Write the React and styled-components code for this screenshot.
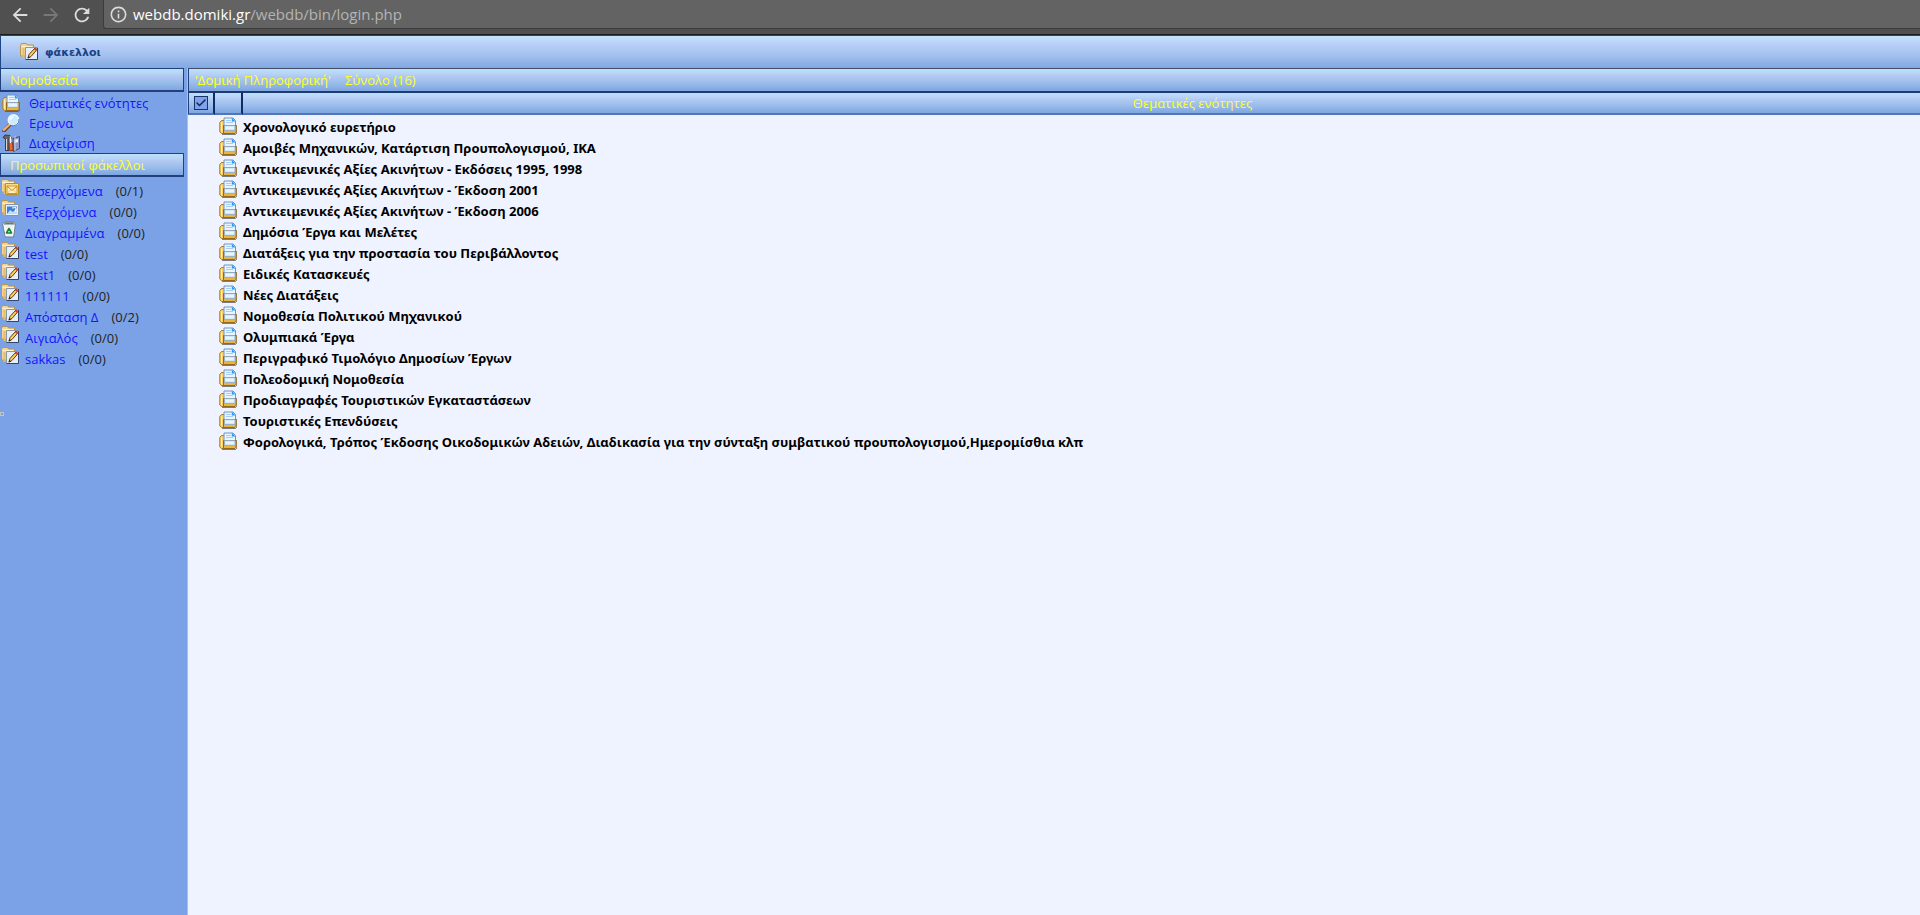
import styled, { createGlobalStyle } from "styled-components";
import { useState } from "react";
import { Check } from "lucide-react";
import { MdArrowBack, MdArrowForward, MdRefresh, MdInfoOutline } from "react-icons/md";

const folders = [
  { name: "Εισερχόμενα", count: "0/1", icon: "inbox" },
  { name: "Εξερχόμενα", count: "0/0", icon: "outbox" },
  { name: "Διαγραμμένα", count: "0/0", icon: "trash" },
  { name: "test", count: "0/0", icon: "note" },
  { name: "test1", count: "0/0", icon: "note" },
  { name: "111111", count: "0/0", icon: "note" },
  { name: "Απόσταση Δ", count: "0/2", icon: "note" },
  { name: "Αιγιαλός", count: "0/0", icon: "note" },
  { name: "sakkas", count: "0/0", icon: "note" },
];

const themes = [
  "Χρονολογικό ευρετήριο",
  "Αμοιβές Μηχανικών, Κατάρτιση Προυπολογισμού, ΙΚΑ",
  "Αντικειμενικές Αξίες Ακινήτων - Εκδόσεις 1995, 1998",
  "Αντικειμενικές Αξίες Ακινήτων - Έκδοση 2001",
  "Αντικειμενικές Αξίες Ακινήτων - Έκδοση 2006",
  "Δημόσια Έργα και Μελέτες",
  "Διατάξεις για την προστασία του Περιβάλλοντος",
  "Ειδικές Κατασκευές",
  "Νέες Διατάξεις",
  "Νομοθεσία Πολιτικού Μηχανικού",
  "Ολυμπιακά Έργα",
  "Περιγραφικό Τιμολόγιο Δημοσίων Έργων",
  "Πολεοδομική Νομοθεσία",
  "Προδιαγραφές Τουριστικών Εγκαταστάσεων",
  "Τουριστικές Επενδύσεις",
  "Φορολογικά, Τρόπος Έκδοσης Οικοδομικών Αδειών, Διαδικασία για την σύνταξη συμβατικού προυπολογισμού,Ημερομίσθια κλπ",
];

const DocsIcon = () => (
  <Icon viewBox="0 0 18 18">
    <path d="M3 17.500h13.500l1.300-1.500V8" fill="none" stroke="#4c4a48" opacity=".7" />
    <path d="M.8 5.500 2.500 3.500H6v13H2.500L.8 15z" fill="#f9cf6a" stroke="#a87a22" />
    <path d="M2.500 5.500v9" stroke="#fff0b8" />
    <path d="M5 1h9l2.500 2.500V10H5z" fill="#eaf6ff" stroke="#6f92c6" />
    <path d="M12.800.8 16.500 4.500h-3.700z" fill="#1d9bf5" />
    <path d="M7 3.500h5M7 5.500h7" stroke="#a9cdf0" />
    <path d="M4.500 8.500h12.700V15l-1.200 1.500H4.500z" fill="#e9b444" stroke="#94691d" />
    <path d="M5.500 8.500h10.500v5H5.500z" fill="#d3e9f8" stroke="#8ea9c8" strokeWidth=".8" />
    <path d="M6.500 11h8.500" stroke="#fff" />
  </Icon>
);

const SearchIcon = () => (
  <Icon viewBox="0 0 18 18">
    <path d="M8 10.500 2 17" stroke="#6b4a35" strokeWidth="3.500" strokeLinecap="round" />
    <path d="M7.500 10.500 1.800 16" stroke="#f3b277" strokeWidth="2" strokeLinecap="round" />
    <circle cx="11.500" cy="6" r="5.200" fill="#c9ecff" stroke="#f2f8ff" strokeWidth="1.500" />
    <path d="M17 5a6 6 0 0 1-9 6" fill="none" stroke="#4a79bd" />
    <path d="M8.500 6a3 3 0 0 1 3-3" fill="none" stroke="#fff" strokeWidth="1.500" />
  </Icon>
);

const ToolsIcon = () => (
  <Icon viewBox="0 0 18 18">
    <path d="M1 3.500 3 1l5 .5 2 3-3-1v13H3.500V5z" fill="#65636a" stroke="#3d3b45" />
    <path d="M4.500 5v11" stroke="#d9d5d0" />
    <path d="M7 8.500h3.500l.5 8H7.500z" fill="#ed6a2c" stroke="#a33a16" />
    <path d="M8.500 2.500V9" stroke="#f2f2f2" strokeWidth="1.500" />
    <path d="M11 4.500 17.500 2.500v12l-6 3z" fill="#8f99c8" stroke="#464b70" />
    <path d="M12.500 6 16 5v3l-3.500 1z" fill="#eef1ff" />
    <path d="M13 2v15" stroke="#c7cbe4" />
  </Icon>
);

const BackFolder = () => (
  <>
    <path d="M.5 2.500 1.500.5h5l1 1.500h6v11H.5z" fill="#f4d694" stroke="#b89650" />
    <path d="M1.500 3.500h11" stroke="#fff1cb" />
    <path d="M2.500 5h2v10h-2z" fill="#e2bd6c" />
  </>
);

const InboxIcon = () => (
  <Icon viewBox="0 0 18 18">
    <BackFolder />
    <path d="M4.500 4.500h13v11h-13z" fill="#fbdc86" stroke="#bb8d2c" />
    <path d="M6 7h10v7.500H6z" fill="#fff0b8" stroke="#cf952c" />
    <path d="m6 7 5 4.500L16 7" fill="none" stroke="#c7851d" />
    <path d="m6.500 14 3-3M15.500 14l-3-3" stroke="#e3b455" strokeWidth=".8" />
  </Icon>
);

const OutboxIcon = () => (
  <Icon viewBox="0 0 18 18">
    <BackFolder />
    <path d="M4.500 4.500h13v11h-13z" fill="#e8f0fb" stroke="#8a93a8" />
    <path d="M6 6.500h10V14H6z" fill="#3f7ed6" />
    <path d="M6 14 9 10l3 2 4-4v6z" fill="#b9dcff" />
    <path d="m11 8 4-.5-.5 4" fill="none" stroke="#fff" />
  </Icon>
);

const TrashIcon = () => (
  <Icon viewBox="0 0 18 18">
    <path d="M1.500 3 4 1h9l1.500 2-2 13h-8z" fill="#edf3f2" stroke="#727f8c" />
    <path d="M2.500 3.500h11.500L12 1.500H4.500z" fill="#6b777d" />
    <path d="M3.500 5 5 15M12.500 5l-1 10" stroke="#fff" />
    <path d="m8 7.500 2.500 4.500h-5z" fill="none" stroke="#128433" strokeWidth="1.600" strokeLinejoin="round" />
  </Icon>
);

const NoteIcon = () => (
  <Icon viewBox="0 0 18 18">
    <BackFolder />
    <path d="M5.500 4.500h12v12h-12z" fill="#e6eefa" stroke="#8d95a5" />
    <path d="M17.500 5v11.500H5.500" fill="none" stroke="#34456b" />
    <path d="M8 15 9 11.500l6-6.500 2 1.500-6 7z" fill="#ffd04f" stroke="#5a3a22" />
    <path d="m14.500 5.500 2 1.500" stroke="#e3372a" strokeWidth="2" />
    <path d="m7.500 15.500 1-2.500 1.500 1.500z" fill="#222" />
  </Icon>
);

const icons = {
  inbox: InboxIcon,
  outbox: OutboxIcon,
  trash: TrashIcon,
  note: NoteIcon,
};

const App = () => {
  const [allSelected, setAllSelected] = useState(true);

  return (
    <Page>
      <GlobalStyle />
      <BrowserBar>
        <BrowserButtons>
          <BrowserButton aria-label="Back">
            <MdArrowBack />
          </BrowserButton>
          <BrowserButton aria-label="Forward" disabled>
            <MdArrowForward />
          </BrowserButton>
          <BrowserButton aria-label="Reload">
            <MdRefresh />
          </BrowserButton>
        </BrowserButtons>
        <Address>
          <MdInfoOutline />
          <span>
            <Host>webdb.domiki.gr</Host>/webdb/bin/login.php
          </span>
        </Address>
      </BrowserBar>

      <Toolbar>
        <ToolbarButton>
          <NoteIcon />
          φάκελλοι
        </ToolbarButton>
      </Toolbar>

      <Content>
        <Sidebar>
          <SidebarTitle>Νομοθεσία</SidebarTitle>
          <Menu>
            <MenuItem>
              <DocsIcon />
              <MenuLink href="#themes">Θεματικές ενότητες</MenuLink>
            </MenuItem>
            <MenuItem>
              <SearchIcon />
              <MenuLink href="#search">Ερευνα</MenuLink>
            </MenuItem>
            <MenuItem>
              <ToolsIcon />
              <MenuLink href="#admin">Διαχείριση</MenuLink>
            </MenuItem>
          </Menu>
          <SidebarTitle>Προσωπικοί φάκελλοι</SidebarTitle>
          <Folders>
            {folders.map((folder) => {
              const FolderIcon = icons[folder.icon];
              return (
                <Folder key={folder.name}>
                  <FolderIcon />
                  <MenuLink href="#folder">{folder.name}</MenuLink>
                  <Count>({folder.count})</Count>
                </Folder>
              );
            })}
          </Folders>
          <Marker />
        </Sidebar>

        <Main>
          <MainTitle>
            <span>'Δομική Πληροφορική'</span>
            <span>Σύνολο (16)</span>
          </MainTitle>
          <Themes>
            <thead>
              <tr>
                <CheckHead>
                  <CheckLabel>
                    <CheckBox
                      type="checkbox"
                      aria-label="Επιλογή όλων"
                      checked={allSelected}
                      onChange={() => setAllSelected(!allSelected)}
                    />
                    {allSelected && <CheckMark />}
                  </CheckLabel>
                </CheckHead>
                <IconHead />
                <NameHead>Θεματικές ενότητες</NameHead>
              </tr>
            </thead>
            <ThemeRows>
              {themes.map((theme) => (
                <tr key={theme}>
                  <Cell />
                  <Cell>
                    <DocsIcon />
                  </Cell>
                  <Cell>
                    <ThemeLink href="#theme">{theme}</ThemeLink>
                  </Cell>
                </tr>
              ))}
            </ThemeRows>
          </Themes>
        </Main>
      </Content>
    </Page>
  );
};

export default App;

const GlobalStyle = createGlobalStyle`
  * {
    box-sizing: border-box;
  }
  body {
    margin: 0;
    font-family: "Open Sans", "Noto Sans", Verdana, sans-serif;
    font-size: 13px;
    overflow: hidden;
  }
`;

const barGradient =
  "linear-gradient(#b8e2fb 0, #b8d4f7 20%, #b0c8f1 35%, #98bcea 65%, #7fa5e2 100%)";

const Page = styled.div`
  display: flex;
  flex-direction: column;
  min-height: 100vh;
  background-color: #eff3ff;
`;

const BrowserBar = styled.header`
  display: flex;
  height: 35px;
  padding-bottom: 5px;
  background-color: #505050;
  border-bottom: 1px solid #1c1c1c;
`;

const BrowserButtons = styled.div`
  display: flex;
  align-items: center;
  gap: 9px;
  width: 103px;
  padding-left: 9px;
`;

const BrowserButton = styled.button`
  display: flex;
  padding: 0;
  border: none;
  background: none;
  color: #dcdcdc;
  font-size: 22px;
  &:disabled {
    color: #777;
  }
`;

const Address = styled.div`
  flex: 1;
  display: flex;
  align-items: center;
  gap: 5px;
  padding-left: 5px;
  background-color: #636363;
  border-left: 1px solid #3c3c3c;
  border-bottom: 1px solid #3c3c3c;
  border-bottom-left-radius: 3px;
  color: #b4b4b4;
  font-size: 15px;
  svg {
    font-size: 19px;
    color: #dcdcdc;
  }
`;

const Host = styled.span`
  color: #fff;
`;

const Toolbar = styled.nav`
  display: flex;
  align-items: center;
  height: 33px;
  padding-left: 19px;
  border-top: 1px solid #1e4586;
  border-left: 1px solid #1e4586;
  background: linear-gradient(#c3e3fb 0, #b9d0f9 25%, #a3c1ef 60%, #80a8e2 100%);
`;

const ToolbarButton = styled.button`
  display: flex;
  align-items: center;
  gap: 7px;
  padding: 0;
  border: none;
  background: none;
  color: #1c4186;
  font-family: "DejaVu Sans", Verdana, sans-serif;
  font-size: 11px;
  font-weight: bold;
`;

const Content = styled.div`
  flex: 1;
  display: flex;
`;

const Sidebar = styled.aside`
  width: 187px;
  background-color: #7ba2e7;
`;

const SidebarTitle = styled.h2`
  height: 24px;
  margin: 0 3px 0 0;
  padding-left: 9px;
  border: 1px solid #21407c;
  border-bottom-width: 2px;
  background: ${barGradient};
  color: #ffff1e;
  font-size: 13px;
  font-weight: normal;
  line-height: 22px;
`;

const Menu = styled.ul`
  margin: 0;
  padding: 1px 0 0 2px;
  list-style: none;
`;

const MenuItem = styled.li`
  display: flex;
  align-items: center;
  gap: 9px;
  height: 20px;
`;

const MenuLink = styled.a`
  color: #1414ff;
  text-decoration: none;
`;

const Folders = styled.ul`
  margin: 0;
  padding: 2px 0 0 1px;
  list-style: none;
`;

const Folder = styled.li`
  display: flex;
  gap: 6px;
  height: 21px;
  line-height: 24px;
`;

const Count = styled.span`
  padding-left: 7px;
  color: #222;
`;

const Marker = styled.div`
  width: 4px;
  height: 4px;
  margin-top: 44px;
  border: 1px solid #c4c4c4;
  background-color: #8d9db8;
`;

const Main = styled.main`
  flex: 1;
  min-width: 0;
  overflow: hidden;
  border-left: 1px solid #a5c0f2;
`;

const MainTitle = styled.h1`
  display: flex;
  gap: 14px;
  height: 23px;
  margin: 0;
  padding-left: 6px;
  border-top: 1px solid #454b66;
  border-left: 1px solid #21407c;
  background: ${barGradient};
  color: #ffff1e;
  font-size: 13px;
  font-weight: normal;
  line-height: 22px;
`;

/* the list is wider than its pane, so its heading is centred past the middle */
const Themes = styled.table`
  width: calc(100% + 222px);
  border-collapse: separate;
  border-spacing: 0;
  table-layout: fixed;
`;

const Head = styled.th`
  height: 24px;
  padding: 0;
  border-top: 2px solid #223a70;
  border-bottom: 2px solid #4f76b8;
  background: ${barGradient};
  color: #ffff1e;
  font-weight: normal;
  line-height: 20px;
`;

const CheckHead = styled(Head)`
  width: 27px;
  border-left: 1px solid #21407c;
  border-right: 2px solid #0f2c66;
`;

const IconHead = styled(Head)`
  width: 28px;
  border-right: 2px solid #0f2c66;
`;

const NameHead = styled(Head)``;

const CheckLabel = styled.label`
  position: relative;
  display: block;
  width: 14px;
  height: 14px;
  margin-left: 5px;
`;

const CheckBox = styled.input`
  appearance: none;
  display: block;
  width: 14px;
  height: 14px;
  margin: 0;
  border: 1px solid #183468;
  background-color: #7fa3ea;
`;

const CheckMark = styled(Check).attrs({ size: 12, strokeWidth: 3 })`
  position: absolute;
  top: 1px;
  left: 1px;
  color: #12264f;
  pointer-events: none;
`;

const ThemeRows = styled.tbody`
  &::before {
    content: "";
    display: table-row;
    height: 2px;
  }
`;

const Cell = styled.td`
  height: 21px;
  padding: 0 0 0 4px;
  line-height: 21px;
  vertical-align: top;
  &:last-child {
    padding-left: 0;
  }
`;

const ThemeLink = styled.a`
  color: #000;
  font-family: "Noto Sans", Verdana, sans-serif;
  font-weight: bold;
  text-decoration: none;
`;

const Icon = styled.svg`
  display: block;
  flex: none;
  width: 18px;
  height: 18px;
`;
